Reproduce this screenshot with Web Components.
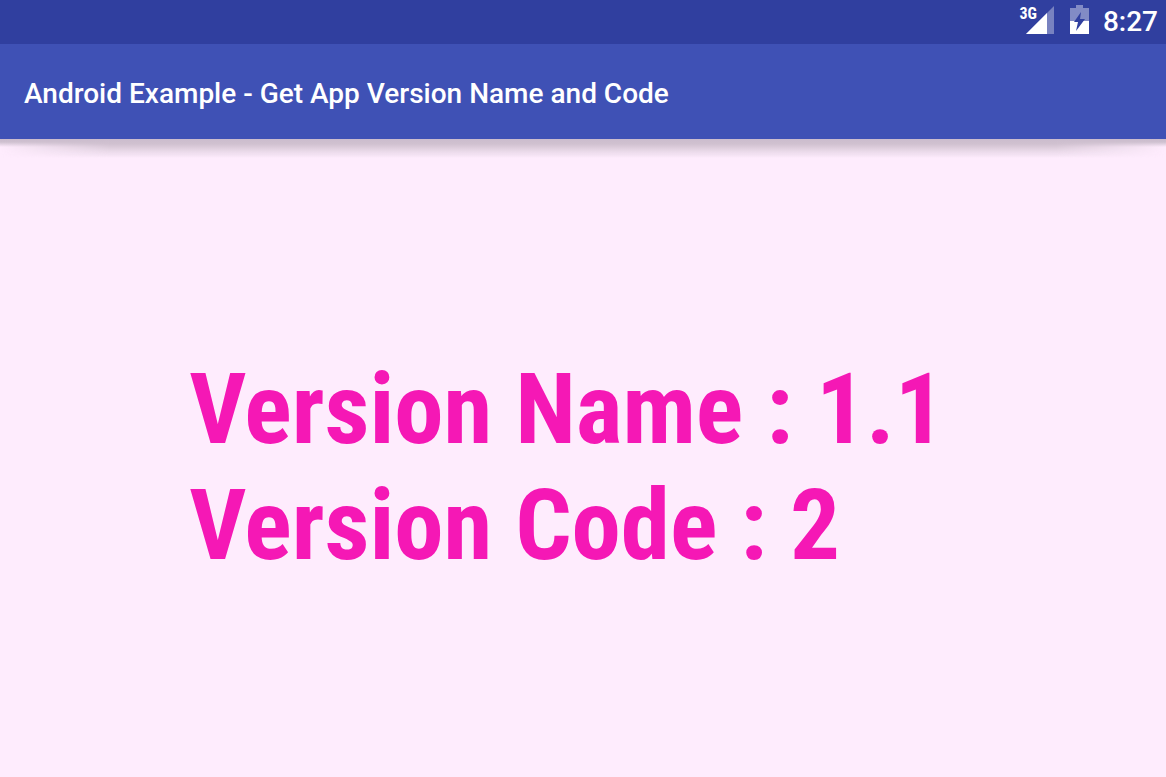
<!DOCTYPE html>
<html lang="en">
<head>
<meta charset="utf-8">
<meta name="viewport" content="width=device-width, initial-scale=1">
<title>Android Example</title>
<style>
  html, body {
    margin: 0;
    height: 100%;
  }
  body {
    font-family: Roboto, "Liberation Sans", sans-serif;
    background: #feecfd;
  }
</style>
</head>
<body>
<app-screen>
  <status-bar slot="status" network="3G">8:27</status-bar>
  <app-bar slot="bar">Android Example - Get App Version Name and Code</app-bar>
  <version-info>
    <version-line label="Version Name">1.1</version-line>
    <version-line label="Version Code">2</version-line>
  </version-info>
</app-screen>

<script>
function createTemplate(html) {
  const template = document.createElement("template");
  template.innerHTML = html;
  return template;
}

const screenTemplate = createTemplate(`
  <style>
    :host {
      display: flex;
      flex-direction: column;
      min-height: 100%;
    }
    main {
      flex: 1;
      display: grid;
      place-items: center;
    }
  </style>
  <slot name="status"></slot>
  <slot name="bar"></slot>
  <main><slot></slot></main>
`);

class AppScreen extends HTMLElement {
  constructor() {
    super();
    this.attachShadow({ mode: "open" }).append(screenTemplate.content.cloneNode(true));
  }
}

const statusTemplate = createTemplate(`
  <style>
    :host {
      display: flex;
      justify-content: flex-end;
      align-items: center;
      height: 44px;
      padding: 0 8px;
      box-sizing: border-box;
      background: #303f9f;
      color: #fff;
      font-size: 28px;
      line-height: 40px;
      font-weight: 500;
    }
    .signal {
      display: flex;
      align-items: flex-start;
      height: 30px;
      padding-bottom: 2px;
    }
    .network {
      font: bold 16px/16px "Roboto Condensed", Roboto, sans-serif;
      margin-right: -11px;
    }
    svg {
      display: block;
    }
    .battery {
      margin: 0 14px 6px 16px;
    }
  </style>
  <span class="signal">
    <span class="network"></span>
    <svg width="28" height="28" viewBox="0 0 28 28" aria-hidden="true">
      <path d="M0 28L28 0V28Z" fill="#fff" fill-opacity=".35"/>
      <path d="M0 28L21 7V28Z" fill="#fff"/>
    </svg>
  </span>
  <svg class="battery" width="19" height="29" viewBox="0 0 19 29" aria-hidden="true">
    <path d="M6 0H13V3H19V16H0V3H6Z" fill="#fff" fill-opacity=".4"/>
    <path d="M0 16H19V29H0Z" fill="#fff"/>
    <path d="M11 7L4 17H8L6 26L15 14H10Z" fill="#303f9f"/>
  </svg>
  <span class="time"><slot></slot></span>
`);

class StatusBar extends HTMLElement {
  constructor() {
    super();
    const shadow = this.attachShadow({ mode: "open" });
    shadow.append(statusTemplate.content.cloneNode(true));
    this.network = shadow.querySelector(".network");
  }

  static get observedAttributes() {
    return ["network"];
  }

  attributeChangedCallback(name, oldValue, newValue) {
    if (name === "network") this.network.textContent = newValue;
  }
}

const barTemplate = createTemplate(`
  <style>
    :host {
      display: block;
    }
    header {
      display: flex;
      align-items: center;
      height: 95px;
      padding: 4px 24px 0;
      box-sizing: border-box;
      background: #3f51b5;
      color: #fff;
      position: relative;
    }
    /* elevation shadow: a short even edge, and a deeper part that fades out towards both sides */
    header::before,
    header::after {
      content: "";
      position: absolute;
      top: 100%;
      left: 0;
      right: 0;
    }
    header::before {
      height: 8px;
      background: linear-gradient(#cbbccd, #cfc1d0 3px, transparent);
    }
    header::after {
      height: 20px;
      background: linear-gradient(#cbbccd, #d0c1d0 5px, #e5d5e4 11px, transparent 19px);
      mask-image: linear-gradient(90deg, transparent, #000 110px calc(100% - 110px), transparent);
    }
    h1 {
      margin: 0;
      font-size: 28px;
      line-height: 36px;
      font-weight: 500;
    }
  </style>
  <header><h1><slot></slot></h1></header>
`);

class AppBar extends HTMLElement {
  constructor() {
    super();
    this.attachShadow({ mode: "open" }).append(barTemplate.content.cloneNode(true));
  }
}

const infoTemplate = createTemplate(`
  <style>
    :host {
      display: block;
      padding: 18px 32px 0 0;
      color: #f518b5;
      font: bold 99px/116px "Roboto Condensed", Roboto, sans-serif;
    }
  </style>
  <slot></slot>
`);

class VersionInfo extends HTMLElement {
  constructor() {
    super();
    this.attachShadow({ mode: "open" }).append(infoTemplate.content.cloneNode(true));
  }
}

const lineTemplate = createTemplate(`
  <style>
    :host {
      display: block;
    }
  </style>
  <span class="label"></span> : <slot></slot>
`);

class VersionLine extends HTMLElement {
  constructor() {
    super();
    const shadow = this.attachShadow({ mode: "open" });
    shadow.append(lineTemplate.content.cloneNode(true));
    this.label = shadow.querySelector(".label");
  }

  static get observedAttributes() {
    return ["label"];
  }

  attributeChangedCallback(name, oldValue, newValue) {
    if (name === "label") this.label.textContent = newValue;
  }
}

customElements.define("app-screen", AppScreen);
customElements.define("status-bar", StatusBar);
customElements.define("app-bar", AppBar);
customElements.define("version-info", VersionInfo);
customElements.define("version-line", VersionLine);
</script>
</body>
</html>
